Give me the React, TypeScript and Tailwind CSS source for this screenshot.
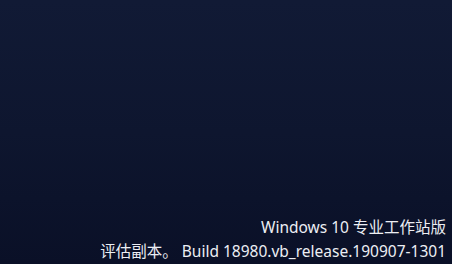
import React from 'react';

export default function App() {
  return (
    <div className="w-[452px] h-[264px] overflow-hidden flex flex-col justify-end items-end bg-gradient-to-b from-[#111a35] via-[#0e162f] to-[#0a1027] pr-[6px] pb-[1px]">
      {/* Activation watermark */}
      <div className="flex flex-col items-end text-[15.5px] leading-[24px] text-[#eceef3] font-['Noto_Sans','Noto_Sans_CJK_SC',sans-serif]">
        <span>Windows 10 专业工作站版</span>
        <span>评估副本。 Build 18980.vb_release.190907-1301</span>
      </div>
    </div>
  );
}
